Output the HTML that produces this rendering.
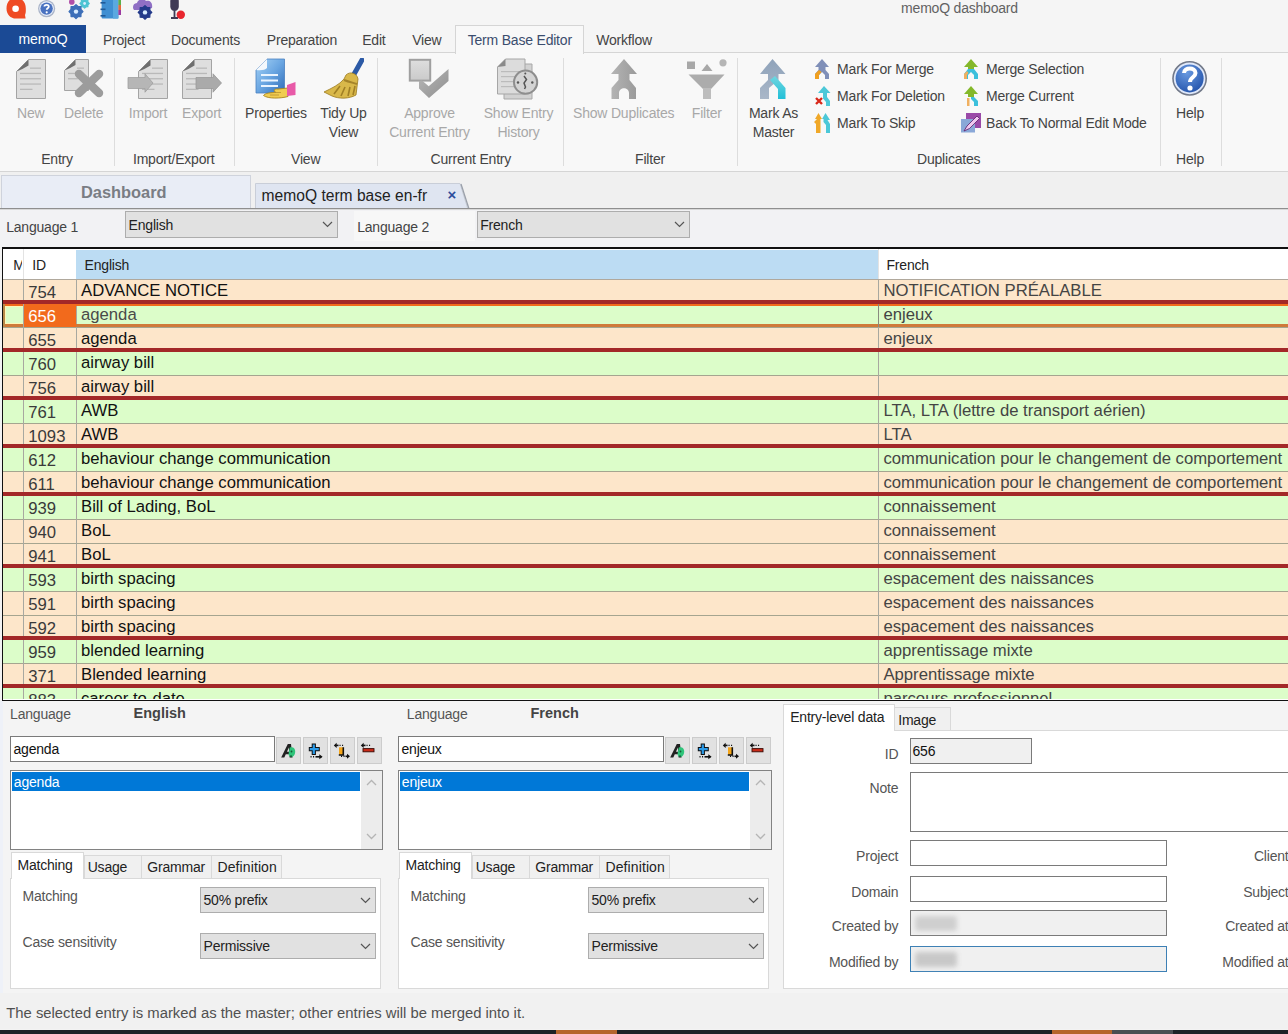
<!DOCTYPE html>
<html><head><meta charset="utf-8"><title>memoQ dashboard</title>
<style>
*{box-sizing:border-box;margin:0;padding:0}
html,body{width:1288px;height:1034px;overflow:hidden;background:#f3f3f3;font-family:"Liberation Sans",sans-serif;position:relative}
.t{position:absolute;white-space:nowrap}
.r{position:absolute}
</style></head><body>
<div class="r" style="left:0px;top:0px;width:1288px;height:53px;background:#f5f5f5;"></div>
<div class="t" style="top:1.15px;font-size:14px;line-height:14px;color:#626262;letter-spacing:-0.2px;left:859.50px;width:200px;text-align:center;">memoQ dashboard</div>
<svg class="r" style="left:5px;top:0px;" width="22" height="20" viewBox="0 0 22 20"><path d="M11 -2 C4 -2 1.5 3 1.5 8.5 C1.5 14.5 5.5 18.6 11 18.6 L20.6 18.6 L20 15 C21 13 20.8 10.5 20.8 8.5 C20.8 3 18 -2 11 -2Z" fill="#ef4a23"/><circle cx="10.6" cy="8.8" r="3.3" fill="#fff"/></svg>
<svg class="r" style="left:37px;top:0px;" width="20" height="19" viewBox="0 0 20 19"><circle cx="9.6" cy="8.6" r="8.6" fill="#aab4c8"/><circle cx="9.6" cy="8.6" r="7.3" fill="#e8eefa"/><circle cx="9.6" cy="8.6" r="6.2" fill="#4a72c0"/><path d="M7.4 6.6 C7.4 4.3 11.8 4.3 11.8 6.6 C11.8 8.2 9.7 8.3 9.7 9.8" fill="none" stroke="#fff" stroke-width="1.8"/><circle cx="9.7" cy="12.3" r="1.1" fill="#fff"/></svg>
<svg class="r" style="left:66px;top:0px;" width="25" height="20" viewBox="0 0 25 20"><circle cx="5.8" cy="1.9" r="2.8" fill="#b04fa8"/><polygon points="23.20,3.50 21.91,4.87 21.85,6.75 19.97,6.81 18.60,8.10 17.23,6.81 15.35,6.75 15.29,4.87 14.00,3.50 15.29,2.13 15.35,0.25 17.23,0.19 18.60,-1.10 19.97,0.19 21.85,0.25 21.91,2.13" fill="#4cc3d2" stroke="#4cc3d2" stroke-width="1.2" stroke-linejoin="round"/><circle cx="18.6" cy="3.5" r="1.4" fill="#d8ecff"/><polygon points="17.00,11.60 15.04,13.69 14.95,16.55 12.09,16.64 10.00,18.60 7.91,16.64 5.05,16.55 4.96,13.69 3.00,11.60 4.96,9.51 5.05,6.65 7.91,6.56 10.00,4.60 12.09,6.56 14.95,6.65 15.04,9.51" fill="#3d6fb8" stroke="#3d6fb8" stroke-width="1.2" stroke-linejoin="round"/><circle cx="10" cy="11.6" r="2.2" fill="#d8ecff"/></svg>
<svg class="r" style="left:100px;top:0px;" width="23" height="20" viewBox="0 0 23 20"><rect x="1.6" y="-1" width="16.8" height="19.6" rx="1" fill="#3f8fd2"/><rect x="13" y="-1" width="5.4" height="19.6" fill="#5aa8e0"/><rect x="18.4" y="-1" width="2.6" height="6" fill="#5ab04a"/><rect x="18.4" y="5" width="2.6" height="5" fill="#e46a3a"/><rect x="18.4" y="10" width="2.6" height="5" fill="#9b3aa0"/><rect x="0.5" y="2" width="5" height="1.6" fill="#1f5a98"/><rect x="0.5" y="8.5" width="5" height="1.6" fill="#1f5a98"/><rect x="0.5" y="15" width="5" height="1.6" fill="#1f5a98"/></svg>
<svg class="r" style="left:132px;top:0px;" width="22" height="20" viewBox="0 0 22 20"><path d="M2 10 C0 8 1 3 5 3 C6 -1 12 -2 14 1 C18 0 21 3 20 8 L14 10 Z" fill="#8f6fc4"/><polygon points="19.80,12.40 17.90,14.43 17.81,17.21 15.03,17.30 13.00,19.20 10.97,17.30 8.19,17.21 8.10,14.43 6.20,12.40 8.10,10.37 8.19,7.59 10.97,7.50 13.00,5.60 15.03,7.50 17.81,7.59 17.90,10.37" fill="#233a8a" stroke="#233a8a" stroke-width="1.2" stroke-linejoin="round"/><circle cx="13" cy="12.4" r="2.2" fill="#d8ecff"/></svg>
<svg class="r" style="left:168px;top:0px;" width="20" height="20" viewBox="0 0 20 20"><rect x="2.3" y="-3" width="8.5" height="14" rx="4.2" fill="#3f3a55"/><path d="M6.5 11 V17.5 M3 18 H10" stroke="#3f3a55" stroke-width="1.8" fill="none"/><circle cx="12.8" cy="14.7" r="4.2" fill="#e8262e"/></svg>
<div class="t" style="top:33.35px;font-size:14px;line-height:14px;color:#444;letter-spacing:-0.2px;left:102.90px;">Project</div>
<div class="t" style="top:33.35px;font-size:14px;line-height:14px;color:#444;letter-spacing:-0.2px;left:171.00px;">Documents</div>
<div class="t" style="top:33.35px;font-size:14px;line-height:14px;color:#444;letter-spacing:-0.2px;left:266.80px;">Preparation</div>
<div class="t" style="top:33.35px;font-size:14px;line-height:14px;color:#444;letter-spacing:-0.2px;left:362.20px;">Edit</div>
<div class="t" style="top:33.35px;font-size:14px;line-height:14px;color:#444;letter-spacing:-0.2px;left:412.20px;">View</div>
<div class="t" style="top:33.35px;font-size:14px;line-height:14px;color:#444;letter-spacing:-0.2px;left:596.20px;">Workflow</div>
<div class="r" style="left:0px;top:52px;width:1288px;height:120px;background:#f8f8f8;border-top:1px solid #d5d5d5;border-bottom:1px solid #d5d5d5;"></div>
<div class="r" style="left:0px;top:25px;width:86px;height:28px;background:#1b4a95;"></div>
<div class="t" style="top:32.45px;font-size:14px;line-height:14px;color:#ffffff;letter-spacing:-0.2px;left:3.00px;width:80px;text-align:center;">memoQ</div>
<div class="r" style="left:455px;top:25px;width:129px;height:29px;background:#f8f8f8;border:1px solid #d5d5d5;border-bottom:none;"></div>
<div class="t" style="top:33.35px;font-size:14px;line-height:14px;color:#3b4d6e;letter-spacing:-0.2px;left:467.70px;">Term Base Editor</div>
<div class="r" style="left:114px;top:58px;width:1px;height:108px;background:#dddddd;"></div>
<div class="r" style="left:234px;top:58px;width:1px;height:108px;background:#dddddd;"></div>
<div class="r" style="left:377px;top:58px;width:1px;height:108px;background:#dddddd;"></div>
<div class="r" style="left:563px;top:58px;width:1px;height:108px;background:#dddddd;"></div>
<div class="r" style="left:737px;top:58px;width:1px;height:108px;background:#dddddd;"></div>
<div class="r" style="left:1160px;top:58px;width:1px;height:108px;background:#dddddd;"></div>
<div class="r" style="left:1221px;top:58px;width:1px;height:108px;background:#dddddd;"></div>
<div class="t" style="top:106.15px;font-size:14px;line-height:14px;color:#a8a8a8;letter-spacing:-0.2px;left:-39.30px;width:140px;text-align:center;">New</div>
<div class="t" style="top:106.15px;font-size:14px;line-height:14px;color:#a8a8a8;letter-spacing:-0.2px;left:13.70px;width:140px;text-align:center;">Delete</div>
<div class="t" style="top:106.15px;font-size:14px;line-height:14px;color:#a8a8a8;letter-spacing:-0.2px;left:78.00px;width:140px;text-align:center;">Import</div>
<div class="t" style="top:106.15px;font-size:14px;line-height:14px;color:#a8a8a8;letter-spacing:-0.2px;left:131.70px;width:140px;text-align:center;">Export</div>
<div class="t" style="top:106.15px;font-size:14px;line-height:14px;color:#444;letter-spacing:-0.2px;left:206.00px;width:140px;text-align:center;">Properties</div>
<div class="t" style="top:106.15px;font-size:14px;line-height:14px;color:#444;letter-spacing:-0.2px;left:273.50px;width:140px;text-align:center;">Tidy Up</div>
<div class="t" style="top:124.55px;font-size:14px;line-height:14px;color:#444;letter-spacing:-0.2px;left:273.50px;width:140px;text-align:center;">View</div>
<div class="t" style="top:106.15px;font-size:14px;line-height:14px;color:#a8a8a8;letter-spacing:-0.2px;left:359.50px;width:140px;text-align:center;">Approve</div>
<div class="t" style="top:124.55px;font-size:14px;line-height:14px;color:#a8a8a8;letter-spacing:-0.2px;left:359.50px;width:140px;text-align:center;">Current Entry</div>
<div class="t" style="top:106.15px;font-size:14px;line-height:14px;color:#a8a8a8;letter-spacing:-0.2px;left:448.50px;width:140px;text-align:center;">Show Entry</div>
<div class="t" style="top:124.55px;font-size:14px;line-height:14px;color:#a8a8a8;letter-spacing:-0.2px;left:448.50px;width:140px;text-align:center;">History</div>
<div class="t" style="top:106.15px;font-size:14px;line-height:14px;color:#a8a8a8;letter-spacing:-0.2px;left:553.70px;width:140px;text-align:center;">Show Duplicates</div>
<div class="t" style="top:106.15px;font-size:14px;line-height:14px;color:#a8a8a8;letter-spacing:-0.2px;left:636.80px;width:140px;text-align:center;">Filter</div>
<div class="t" style="top:106.15px;font-size:14px;line-height:14px;color:#444;letter-spacing:-0.2px;left:703.50px;width:140px;text-align:center;">Mark As</div>
<div class="t" style="top:124.55px;font-size:14px;line-height:14px;color:#444;letter-spacing:-0.2px;left:703.50px;width:140px;text-align:center;">Master</div>
<div class="t" style="top:106.15px;font-size:14px;line-height:14px;color:#444;letter-spacing:-0.2px;left:1120.00px;width:140px;text-align:center;">Help</div>
<div class="t" style="top:152.15px;font-size:14px;line-height:14px;color:#444;letter-spacing:-0.2px;left:-23.00px;width:160px;text-align:center;">Entry</div>
<div class="t" style="top:152.15px;font-size:14px;line-height:14px;color:#444;letter-spacing:-0.2px;left:93.70px;width:160px;text-align:center;">Import/Export</div>
<div class="t" style="top:152.15px;font-size:14px;line-height:14px;color:#444;letter-spacing:-0.2px;left:225.70px;width:160px;text-align:center;">View</div>
<div class="t" style="top:152.15px;font-size:14px;line-height:14px;color:#444;letter-spacing:-0.2px;left:390.80px;width:160px;text-align:center;">Current Entry</div>
<div class="t" style="top:152.15px;font-size:14px;line-height:14px;color:#444;letter-spacing:-0.2px;left:570.00px;width:160px;text-align:center;">Filter</div>
<div class="t" style="top:152.15px;font-size:14px;line-height:14px;color:#444;letter-spacing:-0.2px;left:868.70px;width:160px;text-align:center;">Duplicates</div>
<div class="t" style="top:152.15px;font-size:14px;line-height:14px;color:#444;letter-spacing:-0.2px;left:1110.00px;width:160px;text-align:center;">Help</div>
<div class="t" style="top:61.75px;font-size:14px;line-height:14px;color:#444;letter-spacing:-0.2px;left:837.10px;">Mark For Merge</div>
<div class="t" style="top:88.75px;font-size:14px;line-height:14px;color:#444;letter-spacing:-0.2px;left:837.10px;">Mark For Deletion</div>
<div class="t" style="top:115.75px;font-size:14px;line-height:14px;color:#444;letter-spacing:-0.2px;left:837.10px;">Mark To Skip</div>
<div class="t" style="top:61.75px;font-size:14px;line-height:14px;color:#444;letter-spacing:-0.2px;left:986.00px;">Merge Selection</div>
<div class="t" style="top:88.75px;font-size:14px;line-height:14px;color:#444;letter-spacing:-0.2px;left:986.00px;">Merge Current</div>
<div class="t" style="top:115.75px;font-size:14px;line-height:14px;color:#444;letter-spacing:-0.2px;left:986.00px;">Back To Normal Edit Mode</div>
<svg class="r" style="left:16px;top:59px;" width="30" height="40" viewBox="0 0 30 40"><path d="M12.5 0.5 H29.5 V39.5 H0.5 V12.5 Z" fill="#dedede" stroke="#a4a4a4"/><path d="M0.5 12.5 L12.5 0.5 V6.6 Q6.0 10.8 0.5 12.5Z" fill="#6f6f6f"/><rect x="14" y="8.5" width="11.0" height="1.3" fill="#b9b9b9"/><rect x="4" y="13.8" width="21.0" height="1.3" fill="#b9b9b9"/><rect x="4" y="19.1" width="21.0" height="1.3" fill="#b9b9b9"/><rect x="4" y="24.4" width="21.0" height="1.3" fill="#b9b9b9"/><rect x="4" y="29.7" width="12.5" height="1.3" fill="#b9b9b9"/></svg>
<svg class="r" style="left:64px;top:59px;" width="25" height="32" viewBox="0 0 25 32"><path d="M11.5 0.5 H24.5 V31.5 H0.5 V11.5 Z" fill="#dedede" stroke="#a4a4a4"/><path d="M0.5 11.5 L11.5 0.5 V6.1 Q5.5 9.9 0.5 11.5Z" fill="#6f6f6f"/><rect x="13" y="8.5" width="7.0" height="1.3" fill="#b9b9b9"/><rect x="4" y="13.8" width="16.0" height="1.3" fill="#b9b9b9"/><rect x="4" y="19.1" width="9.8" height="1.3" fill="#b9b9b9"/></svg>
<svg class="r" style="left:73px;top:68px;" width="32" height="31" viewBox="0 0 32 31"><path d="M6 6 L26 25 M26 6 L6 25" stroke="#9c9c9c" stroke-width="8.5" stroke-linecap="round"/></svg>
<svg class="r" style="left:138px;top:59px;" width="30" height="40" viewBox="0 0 30 40"><path d="M12.5 0.5 H29.5 V39.5 H0.5 V12.5 Z" fill="#dedede" stroke="#a4a4a4"/><path d="M0.5 12.5 L12.5 0.5 V6.6 Q6.0 10.8 0.5 12.5Z" fill="#6f6f6f"/><rect x="14" y="8.5" width="11.0" height="1.3" fill="#b9b9b9"/><rect x="4" y="13.8" width="21.0" height="1.3" fill="#b9b9b9"/><rect x="4" y="19.1" width="21.0" height="1.3" fill="#b9b9b9"/><rect x="4" y="24.4" width="21.0" height="1.3" fill="#b9b9b9"/><rect x="4" y="29.7" width="12.5" height="1.3" fill="#b9b9b9"/></svg>
<svg class="r" style="left:127px;top:73px;" width="28" height="20" viewBox="0 0 28 20"><path d="M1 4.5 H18 V0.8 L26 10 L18 19.2 V15.5 H1 Z" fill="#b6b6b6" stroke="#a0a0a0" stroke-width="0.8"/></svg>
<svg class="r" style="left:182px;top:59px;" width="30" height="40" viewBox="0 0 30 40"><path d="M12.5 0.5 H29.5 V39.5 H0.5 V12.5 Z" fill="#dedede" stroke="#a4a4a4"/><path d="M0.5 12.5 L12.5 0.5 V6.6 Q6.0 10.8 0.5 12.5Z" fill="#6f6f6f"/><rect x="14" y="8.5" width="11.0" height="1.3" fill="#b9b9b9"/><rect x="4" y="13.8" width="21.0" height="1.3" fill="#b9b9b9"/><rect x="4" y="19.1" width="21.0" height="1.3" fill="#b9b9b9"/><rect x="4" y="24.4" width="21.0" height="1.3" fill="#b9b9b9"/><rect x="4" y="29.7" width="12.5" height="1.3" fill="#b9b9b9"/></svg>
<svg class="r" style="left:195px;top:73px;" width="28" height="20" viewBox="0 0 28 20"><path d="M1 4.5 H18 V0.8 L26.5 10 L18 19.2 V15.5 H1 Z" fill="#aaaaaa" stroke="#999" stroke-width="0.8"/></svg>
<svg class="r" style="left:254px;top:58px;" width="44" height="42" viewBox="0 0 44 42"><defs><linearGradient id="pb" x1="0" y1="0" x2="1" y2="1"><stop offset="0" stop-color="#a8d4f6"/><stop offset="0.5" stop-color="#6aa6e2"/><stop offset="1" stop-color="#2f6cb8"/></linearGradient></defs>
<path d="M13 1 H30.5 V35 H2 V12 Z" fill="url(#pb)" stroke="#4a80c0" stroke-width="0.8"/>
<path d="M2 12 L13 1 V10 Q10 13 2 12Z" fill="#f4f8fc"/>
<rect x="7" y="16" width="17" height="2" fill="#eaf4ff"/><rect x="7" y="21.5" width="17" height="2" fill="#eaf4ff"/><rect x="7" y="27" width="17" height="2" fill="#eaf4ff"/>
<path d="M9.5 37.5 C11 35 17 34.5 22 34.5 C19 33 20 30.5 24 31 L34 30 L34 38.5 C27 40.5 14 41 9.5 37.5Z" fill="#f0cc50" stroke="#a88420" stroke-width="0.9"/><path d="M16 37 H25 M19 34.5 H27" stroke="#b89030" stroke-width="0.8"/>
<path d="M33 27 L41.5 24 L41.5 37 L33 38Z" fill="#e85aa8"/></svg>
<svg class="r" style="left:322px;top:58px;" width="42" height="42" viewBox="0 0 42 42"><path d="M40 2 L31 18" stroke="#2c5aa6" stroke-width="5" stroke-linecap="round"/>
<path d="M24 17 C28 13 35 15 36 21 L34 37 C27 41 17 41 10 38 L2 34 C10 30 17 27 22 21 Z" fill="#d9b84a" stroke="#9a7a20" stroke-width="0.8"/>
<path d="M22 22 C27 24 32 25 35 26" stroke="#a5842a" stroke-width="2" fill="none"/>
<path d="M12 36 L18 28 M19 38 L23 29 M26 38 L28 29 M31 37 L33 28" stroke="#a07f25" stroke-width="1.6"/></svg>
<svg class="r" style="left:408px;top:58px;" width="43" height="42" viewBox="0 0 43 42"><defs><linearGradient id="ag" x1="0" y1="0" x2="0" y2="1"><stop offset="0" stop-color="#dedede"/><stop offset="1" stop-color="#cacaca"/></linearGradient><linearGradient id="ck" x1="0" y1="0" x2="1" y2="1"><stop offset="0" stop-color="#b8b8b8"/><stop offset="1" stop-color="#8f8f8f"/></linearGradient></defs>
<rect x="1.8" y="1.8" width="20.4" height="20.8" fill="url(#ag)" stroke="#a0a0a0" stroke-width="2"/>
<path d="M11 23 V30.5 L21 40 L40.5 23 V11 L20.7 28.2 L14 22.5 Z" fill="url(#ck)"/></svg>
<svg class="r" style="left:496px;top:58px;" width="44" height="42" viewBox="0 0 44 42"><path d="M8 6 H36 V41 H8Z" fill="#d2d2d2" stroke="#a8a8a8"/>
<path d="M9.5 1 H29 V36 H1.5 V9 Z" fill="#dcdcdc" stroke="#a6a6a6"/>
<path d="M1.5 9 L9.5 1 V8 Z" fill="#8a8a8a"/>
<rect x="5" y="13" width="20" height="1.2" fill="#bbb"/><rect x="5" y="18" width="20" height="1.2" fill="#bbb"/><rect x="5" y="23" width="20" height="1.2" fill="#bbb"/><rect x="5" y="28" width="20" height="1.2" fill="#bbb"/>
<circle cx="29.6" cy="24.2" r="11.6" fill="#d4d4d4" stroke="#8e8e8e" stroke-width="2"/>
<path d="M28 18 L30.5 21.5 L28 25 L29.5 29 L28.5 31" stroke="#555" stroke-width="1.5" fill="none"/><circle cx="29.3" cy="15.5" r="1" fill="#555"/>
<circle cx="22" cy="24.5" r="1.2" fill="#555"/><circle cx="36.3" cy="24.5" r="1.2" fill="#555"/></svg>
<svg class="r" style="left:610px;top:58px;" width="28" height="42" viewBox="0 0 28 42"><defs><linearGradient id="sd" x1="0" y1="0" x2="1" y2="0"><stop offset="0" stop-color="#b4b4b4"/><stop offset="1" stop-color="#9a9a9a"/></linearGradient></defs><path d="M14 1 L27 16 H19.5 V22 L26 30 V41 H19 V35 C19 28.5 9 28.5 9 35 V41 H1.5 V30 L8.5 22 V16 H1 Z" fill="url(#sd)"/></svg>
<svg class="r" style="left:686px;top:58px;" width="42" height="42" viewBox="0 0 42 42"><rect x="1" y="3.5" width="8" height="7.5" fill="#a8a8a8"/><path d="M21 6 L26.5 13 H15.5Z" fill="#a8a8a8"/><circle cx="37" cy="4.8" r="3.6" fill="#b5b5b5"/>
<path d="M2.5 16.5 H38.5 L25 31 H17Z" fill="#acacac"/><rect x="17" y="30" width="8" height="11" fill="#bdbdbd"/></svg>
<svg class="r" style="left:759px;top:58px;" width="28" height="42" viewBox="0 0 28 42"><defs><linearGradient id="mg" x1="0" y1="0" x2="0" y2="1"><stop offset="0" stop-color="#8fa3ba"/><stop offset="1" stop-color="#a9b7c8"/></linearGradient><linearGradient id="tg" x1="0" y1="0" x2="0" y2="1"><stop offset="0" stop-color="#6fd6e0"/><stop offset="1" stop-color="#22c0d8"/></linearGradient></defs>
<path d="M13.5 1 L26.5 16 H19.5 V22 L10 30 V41 H1 V30 L9 22 V16 H1 Z" fill="url(#mg)"/>
<path d="M11 22 L16 18 L26.5 30 V41 H19 V31Z" fill="url(#tg)"/></svg>
<svg class="r" style="left:814px;top:58px;" width="16" height="22" viewBox="0 0 16 22"><path d="M8 1 L15 9 H11.5 V12 L15 16 V21 H11 V17 L8 14 L5 17 V21 H1 V16 L4.5 12 V9 H1Z" fill="#7f8fb8"/><path d="M1 21 V16 L5 12 L7.5 14 L5 17 V21Z" fill="#f0a020"/></svg>
<svg class="r" style="left:814px;top:85px;" width="17" height="22" viewBox="0 0 17 22"><path d="M10 1 L16.5 8 H13 V12 L16 16 V21 H12 V17 L9 13.5 V8 H4Z" fill="#4cc8d8"/><path d="M2 13 L8 19 M8 13 L2 19" stroke="#d8281a" stroke-width="2.4"/></svg>
<svg class="r" style="left:813px;top:112px;" width="18" height="22" viewBox="0 0 18 22"><path d="M5.5 1 L9 7 H7.5 V21 H3 V12 L1 10 L4 7 H2Z" fill="#f0a828"/><path d="M12.5 1 L17 8 H14.5 L17 12 V21 H13 V13 L10.5 10 V7 H9Z" fill="#4cc8d8"/></svg>
<svg class="r" style="left:963px;top:58px;" width="16" height="22" viewBox="0 0 16 22"><path d="M8 1 L15 9 H11 V12 H5 V9 H1Z" fill="#84b82a"/><path d="M5 11 H11 L15 16 V21 H11 V17 L8 14 L5 17 V21 H1 V16Z" fill="#3cc0dc"/><path d="M1 21 V16 L4 13 L5.5 15 L4 17 V21Z" fill="#f0b060"/></svg>
<svg class="r" style="left:963px;top:85px;" width="16" height="22" viewBox="0 0 16 22"><path d="M8 1 L15 9 H11 V12 H5 V9 H1Z" fill="#84b82a"/><path d="M5 12 H11 L15 16 V21 H11 V17 L8 14 V12Z" fill="#3cc0dc"/><path d="M4 13 H6.5 V21 H4Z" fill="#f0b060"/></svg>
<svg class="r" style="left:960px;top:112px;" width="23" height="22" viewBox="0 0 23 22"><rect x="6" y="1" width="15" height="15" fill="#9a4aa8"/><rect x="1" y="7" width="14" height="13.5" fill="#8aa8d8"/><path d="M4 19 L7 14 L17 4 L19.5 6.5 L9.5 16.5Z" fill="#f0c8f0" stroke="#5a1a6a" stroke-width="0.8"/></svg>
<svg class="r" style="left:1171px;top:60px;" width="38" height="38" viewBox="0 0 38 38"><defs><radialGradient id="hg" cx="0.4" cy="0.3" r="0.8"><stop offset="0" stop-color="#6a9ae0"/><stop offset="1" stop-color="#1f4fa8"/></radialGradient></defs>
<circle cx="18.6" cy="18.4" r="17.4" fill="#717888"/><circle cx="18.6" cy="18.4" r="15.8" fill="#dfe8fa"/><circle cx="18.6" cy="18.4" r="14" fill="url(#hg)"/>
<path d="M13 13 C13 7 24.5 7 24.5 13 C24.5 17.5 19 17 19 22" fill="none" stroke="#fff" stroke-width="4"/><circle cx="19" cy="28" r="2.6" fill="#fff"/></svg>
<div class="r" style="left:0px;top:172px;width:1288px;height:36px;background:#f0f0f0;"></div>
<div class="r" style="left:1px;top:175px;width:250px;height:34px;background:#e9edf6;border:1px solid #cfd3dc;border-bottom:none;"></div>
<div class="t" style="top:183.82px;font-size:16.4px;line-height:16.4px;color:#7a7d84;font-weight:bold;left:23.80px;width:200px;text-align:center;">Dashboard</div>
<svg class="r" style="left:255px;top:183px;" width="215" height="27" viewBox="0 0 215 27"><path d="M0.5 26.5 V0.5 H205 L213 26.5" fill="#dfe5f1" stroke="#c9ced8" stroke-width="1"/><path d="M206 1 L214 26" stroke="#9aa0aa" stroke-width="1.3" fill="none"/></svg>
<div class="t" style="top:187.69px;font-size:15.6px;line-height:15.6px;color:#222;left:261.60px;">memoQ term base en-fr</div>
<div class="t" style="top:187.30px;font-size:15px;line-height:15px;color:#2c4c9c;font-weight:bold;left:442.00px;width:20px;text-align:center;">×</div>
<div class="r" style="left:0px;top:208px;width:1288px;height:1px;background:#8f8f8f;"></div>
<div class="r" style="left:0px;top:209px;width:1288px;height:1px;background:#d8d8d8;"></div>
<div class="r" style="left:0px;top:210px;width:1288px;height:37px;background:#f2f2f4;"></div>
<div class="t" style="top:220.15px;font-size:14px;line-height:14px;color:#444;letter-spacing:-0.2px;left:6.20px;">Language 1</div>
<div class="r" style="left:125px;top:211px;width:213px;height:27px;background:#e1e1e1;border:1px solid #adadad;"></div>
<div class="t" style="top:218.15px;font-size:14px;line-height:14px;color:#222;letter-spacing:-0.2px;left:128.60px;">English</div>
<svg class="r" style="left:322px;top:221px;" width="11" height="7" viewBox="0 0 11 7"><path d="M1 1 L5.5 5.5 L10 1" fill="none" stroke="#555" stroke-width="1.2"/></svg>
<div class="r" style="left:354px;top:211px;width:121px;height:30px;background:#f7f7f7;"></div>
<div class="t" style="top:220.15px;font-size:14px;line-height:14px;color:#444;letter-spacing:-0.2px;left:357.20px;">Language 2</div>
<div class="r" style="left:477px;top:211px;width:213px;height:27px;background:#e1e1e1;border:1px solid #adadad;"></div>
<div class="t" style="top:218.15px;font-size:14px;line-height:14px;color:#222;letter-spacing:-0.2px;left:480.20px;">French</div>
<svg class="r" style="left:674px;top:221px;" width="11" height="7" viewBox="0 0 11 7"><path d="M1 1 L5.5 5.5 L10 1" fill="none" stroke="#555" stroke-width="1.2"/></svg>
<div class="r" style="left:2px;top:247px;width:1290px;height:454px;background:#ffffff;border-left:1px solid #111;border-top:2px solid #111;border-bottom:1px solid #111;"></div>
<div class="r" style="left:3px;top:249px;width:1285px;height:30px;background:#ffffff;"></div>
<div class="r" style="left:76px;top:250px;width:802px;height:29px;background:#bcdcf3;"></div>
<div class="r" style="left:3px;top:279px;width:1285px;height:1px;background:#b0a89c;"></div>
<div class="r" style="left:23px;top:249px;width:1px;height:30px;background:#e3e3e3;"></div>
<div class="r" style="left:878px;top:249px;width:1px;height:30px;background:#e3e3e3;"></div>
<div class="t" style="top:258.15px;font-size:14px;line-height:14px;color:#222;letter-spacing:-0.2px;left:13.20px;width:9px;overflow:hidden;">M</div>
<div class="t" style="top:258.15px;font-size:14px;line-height:14px;color:#222;letter-spacing:-0.2px;left:32.20px;">ID</div>
<div class="t" style="top:258.15px;font-size:14px;line-height:14px;color:#222;letter-spacing:-0.2px;left:84.60px;">English</div>
<div class="t" style="top:258.15px;font-size:14px;line-height:14px;color:#222;letter-spacing:-0.2px;left:886.50px;">French</div>
<div class="r" style="left:3px;top:280px;width:1285px;height:419px;overflow:hidden">
<div class="r" style="left:0px;top:0px;width:1290px;height:24px;background:#fde6ca;"></div>
<div class="r" style="left:0px;top:20px;width:1285px;height:4px;background:#a32828;"></div>
<div class="r" style="left:20px;top:0px;width:1px;height:20px;background:#a8a8a0;"></div>
<div class="r" style="left:73px;top:0px;width:1px;height:20px;background:#a8a8a0;"></div>
<div class="r" style="left:875px;top:0px;width:1px;height:20px;background:#a8a8a0;"></div>
<div class="t" style="top:4.66px;font-size:16.7px;line-height:16.7px;color:#3a3a3a;left:25.30px;">754</div>
<div class="t" style="top:2.86px;font-size:16.7px;line-height:16.7px;color:#111;left:78.00px;">ADVANCE NOTICE</div>
<div class="t" style="top:2.86px;font-size:16.7px;line-height:16.7px;color:#444;left:880.40px;">NOTIFICATION PRÉALABLE</div>
<div class="r" style="left:0px;top:24px;width:1290px;height:24px;background:#dcfdc9;"></div>
<div class="r" style="left:0px;top:47px;width:1290px;height:1px;background:#a5a590;"></div>
<div class="r" style="left:20px;top:24px;width:1px;height:24px;background:#a8a8a0;"></div>
<div class="r" style="left:73px;top:24px;width:1px;height:24px;background:#a8a8a0;"></div>
<div class="r" style="left:875px;top:24px;width:1px;height:24px;background:#a8a8a0;"></div>
<div class="r" style="left:0px;top:24px;width:1290px;height:2px;background:#f26a1c;"></div>
<div class="r" style="left:0px;top:44px;width:1290px;height:3px;background:#cf7a3a;"></div>
<div class="r" style="left:0px;top:24px;width:2px;height:23px;background:#b8894a;"></div>
<div class="r" style="left:2px;top:26px;width:18px;height:18px;border:1px solid #fff6b8;border-right:none;"></div>
<div class="r" style="left:20px;top:24px;width:1px;height:23px;background:#a8a8a0;"></div>
<div class="r" style="left:875px;top:24px;width:1px;height:23px;background:#8a8a80;"></div>
<div class="r" style="left:21px;top:24px;width:52px;height:23px;background:#f26a1c;"></div>
<div class="t" style="top:28.66px;font-size:16.7px;line-height:16.7px;color:#ffffff;left:25.30px;">656</div>
<div class="t" style="top:26.86px;font-size:16.7px;line-height:16.7px;color:#4a4a4a;left:78.00px;">agenda</div>
<div class="t" style="top:26.86px;font-size:16.7px;line-height:16.7px;color:#444;left:880.40px;">enjeux</div>
<div class="r" style="left:0px;top:48px;width:1290px;height:24px;background:#fde6ca;"></div>
<div class="r" style="left:0px;top:68px;width:1285px;height:4px;background:#a32828;"></div>
<div class="r" style="left:20px;top:48px;width:1px;height:20px;background:#a8a8a0;"></div>
<div class="r" style="left:73px;top:48px;width:1px;height:20px;background:#a8a8a0;"></div>
<div class="r" style="left:875px;top:48px;width:1px;height:20px;background:#a8a8a0;"></div>
<div class="t" style="top:52.66px;font-size:16.7px;line-height:16.7px;color:#3a3a3a;left:25.30px;">655</div>
<div class="t" style="top:50.86px;font-size:16.7px;line-height:16.7px;color:#111;left:78.00px;">agenda</div>
<div class="t" style="top:50.86px;font-size:16.7px;line-height:16.7px;color:#444;left:880.40px;">enjeux</div>
<div class="r" style="left:0px;top:72px;width:1290px;height:24px;background:#dcfdc9;"></div>
<div class="r" style="left:0px;top:95px;width:1290px;height:1px;background:#a5a590;"></div>
<div class="r" style="left:20px;top:72px;width:1px;height:24px;background:#a8a8a0;"></div>
<div class="r" style="left:73px;top:72px;width:1px;height:24px;background:#a8a8a0;"></div>
<div class="r" style="left:875px;top:72px;width:1px;height:24px;background:#a8a8a0;"></div>
<div class="t" style="top:76.66px;font-size:16.7px;line-height:16.7px;color:#3a3a3a;left:25.30px;">760</div>
<div class="t" style="top:74.86px;font-size:16.7px;line-height:16.7px;color:#111;left:78.00px;">airway bill</div>
<div class="t" style="top:74.86px;font-size:16.7px;line-height:16.7px;color:#444;left:880.40px;"></div>
<div class="r" style="left:0px;top:96px;width:1290px;height:24px;background:#fde6ca;"></div>
<div class="r" style="left:0px;top:116px;width:1285px;height:4px;background:#a32828;"></div>
<div class="r" style="left:20px;top:96px;width:1px;height:20px;background:#a8a8a0;"></div>
<div class="r" style="left:73px;top:96px;width:1px;height:20px;background:#a8a8a0;"></div>
<div class="r" style="left:875px;top:96px;width:1px;height:20px;background:#a8a8a0;"></div>
<div class="t" style="top:100.66px;font-size:16.7px;line-height:16.7px;color:#3a3a3a;left:25.30px;">756</div>
<div class="t" style="top:98.86px;font-size:16.7px;line-height:16.7px;color:#111;left:78.00px;">airway bill</div>
<div class="t" style="top:98.86px;font-size:16.7px;line-height:16.7px;color:#444;left:880.40px;"></div>
<div class="r" style="left:0px;top:120px;width:1290px;height:24px;background:#dcfdc9;"></div>
<div class="r" style="left:0px;top:143px;width:1290px;height:1px;background:#a5a590;"></div>
<div class="r" style="left:20px;top:120px;width:1px;height:24px;background:#a8a8a0;"></div>
<div class="r" style="left:73px;top:120px;width:1px;height:24px;background:#a8a8a0;"></div>
<div class="r" style="left:875px;top:120px;width:1px;height:24px;background:#a8a8a0;"></div>
<div class="t" style="top:124.66px;font-size:16.7px;line-height:16.7px;color:#3a3a3a;left:25.30px;">761</div>
<div class="t" style="top:122.86px;font-size:16.7px;line-height:16.7px;color:#111;left:78.00px;">AWB</div>
<div class="t" style="top:122.86px;font-size:16.7px;line-height:16.7px;color:#444;left:880.40px;">LTA, LTA (lettre de transport aérien)</div>
<div class="r" style="left:0px;top:144px;width:1290px;height:24px;background:#fde6ca;"></div>
<div class="r" style="left:0px;top:164px;width:1285px;height:4px;background:#a32828;"></div>
<div class="r" style="left:20px;top:144px;width:1px;height:20px;background:#a8a8a0;"></div>
<div class="r" style="left:73px;top:144px;width:1px;height:20px;background:#a8a8a0;"></div>
<div class="r" style="left:875px;top:144px;width:1px;height:20px;background:#a8a8a0;"></div>
<div class="t" style="top:148.66px;font-size:16.7px;line-height:16.7px;color:#3a3a3a;left:25.30px;">1093</div>
<div class="t" style="top:146.86px;font-size:16.7px;line-height:16.7px;color:#111;left:78.00px;">AWB</div>
<div class="t" style="top:146.86px;font-size:16.7px;line-height:16.7px;color:#444;left:880.40px;">LTA</div>
<div class="r" style="left:0px;top:168px;width:1290px;height:24px;background:#dcfdc9;"></div>
<div class="r" style="left:0px;top:191px;width:1290px;height:1px;background:#a5a590;"></div>
<div class="r" style="left:20px;top:168px;width:1px;height:24px;background:#a8a8a0;"></div>
<div class="r" style="left:73px;top:168px;width:1px;height:24px;background:#a8a8a0;"></div>
<div class="r" style="left:875px;top:168px;width:1px;height:24px;background:#a8a8a0;"></div>
<div class="t" style="top:172.66px;font-size:16.7px;line-height:16.7px;color:#3a3a3a;left:25.30px;">612</div>
<div class="t" style="top:170.86px;font-size:16.7px;line-height:16.7px;color:#111;left:78.00px;">behaviour change communication</div>
<div class="t" style="top:170.86px;font-size:16.7px;line-height:16.7px;color:#444;left:880.40px;">communication pour le changement de comportement</div>
<div class="r" style="left:0px;top:192px;width:1290px;height:24px;background:#fde6ca;"></div>
<div class="r" style="left:0px;top:212px;width:1285px;height:4px;background:#a32828;"></div>
<div class="r" style="left:20px;top:192px;width:1px;height:20px;background:#a8a8a0;"></div>
<div class="r" style="left:73px;top:192px;width:1px;height:20px;background:#a8a8a0;"></div>
<div class="r" style="left:875px;top:192px;width:1px;height:20px;background:#a8a8a0;"></div>
<div class="t" style="top:196.66px;font-size:16.7px;line-height:16.7px;color:#3a3a3a;left:25.30px;">611</div>
<div class="t" style="top:194.86px;font-size:16.7px;line-height:16.7px;color:#111;left:78.00px;">behaviour change communication</div>
<div class="t" style="top:194.86px;font-size:16.7px;line-height:16.7px;color:#444;left:880.40px;">communication pour le changement de comportement</div>
<div class="r" style="left:0px;top:216px;width:1290px;height:24px;background:#dcfdc9;"></div>
<div class="r" style="left:0px;top:239px;width:1290px;height:1px;background:#a5a590;"></div>
<div class="r" style="left:20px;top:216px;width:1px;height:24px;background:#a8a8a0;"></div>
<div class="r" style="left:73px;top:216px;width:1px;height:24px;background:#a8a8a0;"></div>
<div class="r" style="left:875px;top:216px;width:1px;height:24px;background:#a8a8a0;"></div>
<div class="t" style="top:220.66px;font-size:16.7px;line-height:16.7px;color:#3a3a3a;left:25.30px;">939</div>
<div class="t" style="top:218.86px;font-size:16.7px;line-height:16.7px;color:#111;left:78.00px;">Bill of Lading, BoL</div>
<div class="t" style="top:218.86px;font-size:16.7px;line-height:16.7px;color:#444;left:880.40px;">connaissement</div>
<div class="r" style="left:0px;top:240px;width:1290px;height:24px;background:#fde6ca;"></div>
<div class="r" style="left:0px;top:263px;width:1290px;height:1px;background:#a5a590;"></div>
<div class="r" style="left:20px;top:240px;width:1px;height:24px;background:#a8a8a0;"></div>
<div class="r" style="left:73px;top:240px;width:1px;height:24px;background:#a8a8a0;"></div>
<div class="r" style="left:875px;top:240px;width:1px;height:24px;background:#a8a8a0;"></div>
<div class="t" style="top:244.66px;font-size:16.7px;line-height:16.7px;color:#3a3a3a;left:25.30px;">940</div>
<div class="t" style="top:242.86px;font-size:16.7px;line-height:16.7px;color:#111;left:78.00px;">BoL</div>
<div class="t" style="top:242.86px;font-size:16.7px;line-height:16.7px;color:#444;left:880.40px;">connaissement</div>
<div class="r" style="left:0px;top:264px;width:1290px;height:24px;background:#fde6ca;"></div>
<div class="r" style="left:0px;top:284px;width:1285px;height:4px;background:#a32828;"></div>
<div class="r" style="left:20px;top:264px;width:1px;height:20px;background:#a8a8a0;"></div>
<div class="r" style="left:73px;top:264px;width:1px;height:20px;background:#a8a8a0;"></div>
<div class="r" style="left:875px;top:264px;width:1px;height:20px;background:#a8a8a0;"></div>
<div class="t" style="top:268.66px;font-size:16.7px;line-height:16.7px;color:#3a3a3a;left:25.30px;">941</div>
<div class="t" style="top:266.86px;font-size:16.7px;line-height:16.7px;color:#111;left:78.00px;">BoL</div>
<div class="t" style="top:266.86px;font-size:16.7px;line-height:16.7px;color:#444;left:880.40px;">connaissement</div>
<div class="r" style="left:0px;top:288px;width:1290px;height:24px;background:#dcfdc9;"></div>
<div class="r" style="left:0px;top:311px;width:1290px;height:1px;background:#a5a590;"></div>
<div class="r" style="left:20px;top:288px;width:1px;height:24px;background:#a8a8a0;"></div>
<div class="r" style="left:73px;top:288px;width:1px;height:24px;background:#a8a8a0;"></div>
<div class="r" style="left:875px;top:288px;width:1px;height:24px;background:#a8a8a0;"></div>
<div class="t" style="top:292.66px;font-size:16.7px;line-height:16.7px;color:#3a3a3a;left:25.30px;">593</div>
<div class="t" style="top:290.86px;font-size:16.7px;line-height:16.7px;color:#111;left:78.00px;">birth spacing</div>
<div class="t" style="top:290.86px;font-size:16.7px;line-height:16.7px;color:#444;left:880.40px;">espacement des naissances</div>
<div class="r" style="left:0px;top:312px;width:1290px;height:24px;background:#fde6ca;"></div>
<div class="r" style="left:0px;top:335px;width:1290px;height:1px;background:#a5a590;"></div>
<div class="r" style="left:20px;top:312px;width:1px;height:24px;background:#a8a8a0;"></div>
<div class="r" style="left:73px;top:312px;width:1px;height:24px;background:#a8a8a0;"></div>
<div class="r" style="left:875px;top:312px;width:1px;height:24px;background:#a8a8a0;"></div>
<div class="t" style="top:316.66px;font-size:16.7px;line-height:16.7px;color:#3a3a3a;left:25.30px;">591</div>
<div class="t" style="top:314.86px;font-size:16.7px;line-height:16.7px;color:#111;left:78.00px;">birth spacing</div>
<div class="t" style="top:314.86px;font-size:16.7px;line-height:16.7px;color:#444;left:880.40px;">espacement des naissances</div>
<div class="r" style="left:0px;top:336px;width:1290px;height:24px;background:#fde6ca;"></div>
<div class="r" style="left:0px;top:356px;width:1285px;height:4px;background:#a32828;"></div>
<div class="r" style="left:20px;top:336px;width:1px;height:20px;background:#a8a8a0;"></div>
<div class="r" style="left:73px;top:336px;width:1px;height:20px;background:#a8a8a0;"></div>
<div class="r" style="left:875px;top:336px;width:1px;height:20px;background:#a8a8a0;"></div>
<div class="t" style="top:340.66px;font-size:16.7px;line-height:16.7px;color:#3a3a3a;left:25.30px;">592</div>
<div class="t" style="top:338.86px;font-size:16.7px;line-height:16.7px;color:#111;left:78.00px;">birth spacing</div>
<div class="t" style="top:338.86px;font-size:16.7px;line-height:16.7px;color:#444;left:880.40px;">espacement des naissances</div>
<div class="r" style="left:0px;top:360px;width:1290px;height:24px;background:#dcfdc9;"></div>
<div class="r" style="left:0px;top:383px;width:1290px;height:1px;background:#a5a590;"></div>
<div class="r" style="left:20px;top:360px;width:1px;height:24px;background:#a8a8a0;"></div>
<div class="r" style="left:73px;top:360px;width:1px;height:24px;background:#a8a8a0;"></div>
<div class="r" style="left:875px;top:360px;width:1px;height:24px;background:#a8a8a0;"></div>
<div class="t" style="top:364.66px;font-size:16.7px;line-height:16.7px;color:#3a3a3a;left:25.30px;">959</div>
<div class="t" style="top:362.86px;font-size:16.7px;line-height:16.7px;color:#111;left:78.00px;">blended learning</div>
<div class="t" style="top:362.86px;font-size:16.7px;line-height:16.7px;color:#444;left:880.40px;">apprentissage mixte</div>
<div class="r" style="left:0px;top:384px;width:1290px;height:24px;background:#fde6ca;"></div>
<div class="r" style="left:0px;top:404px;width:1285px;height:4px;background:#a32828;"></div>
<div class="r" style="left:20px;top:384px;width:1px;height:20px;background:#a8a8a0;"></div>
<div class="r" style="left:73px;top:384px;width:1px;height:20px;background:#a8a8a0;"></div>
<div class="r" style="left:875px;top:384px;width:1px;height:20px;background:#a8a8a0;"></div>
<div class="t" style="top:388.66px;font-size:16.7px;line-height:16.7px;color:#3a3a3a;left:25.30px;">371</div>
<div class="t" style="top:386.86px;font-size:16.7px;line-height:16.7px;color:#111;left:78.00px;">Blended learning</div>
<div class="t" style="top:386.86px;font-size:16.7px;line-height:16.7px;color:#444;left:880.40px;">Apprentissage mixte</div>
<div class="r" style="left:0px;top:408px;width:1290px;height:24px;background:#dcfdc9;"></div>
<div class="r" style="left:0px;top:431px;width:1290px;height:1px;background:#a5a590;"></div>
<div class="r" style="left:20px;top:408px;width:1px;height:24px;background:#a8a8a0;"></div>
<div class="r" style="left:73px;top:408px;width:1px;height:24px;background:#a8a8a0;"></div>
<div class="r" style="left:875px;top:408px;width:1px;height:24px;background:#a8a8a0;"></div>
<div class="t" style="top:412.66px;font-size:16.7px;line-height:16.7px;color:#3a3a3a;left:25.30px;">883</div>
<div class="t" style="top:410.86px;font-size:16.7px;line-height:16.7px;color:#111;left:78.00px;">career to-date</div>
<div class="t" style="top:410.86px;font-size:16.7px;line-height:16.7px;color:#444;left:880.40px;">parcours professionnel</div>
</div>
<div class="r" style="left:0px;top:701px;width:1288px;height:292px;background:#f4f4f4;"></div>
<div class="r" style="left:0px;top:701px;width:3px;height:292px;background:#eef1f8;"></div>
<div class="t" style="top:707.35px;font-size:14px;line-height:14px;color:#555;letter-spacing:-0.2px;left:10.10px;">Language</div>
<div class="t" style="top:705.73px;font-size:14.5px;line-height:14.5px;color:#444;font-weight:bold;left:133.50px;">English</div>
<div class="r" style="left:10px;top:736px;width:265px;height:26px;background:#ffffff;border:1px solid #7a7a7a;"></div>
<div class="t" style="top:741.85px;font-size:14px;line-height:14px;color:#111;letter-spacing:-0.2px;left:13.50px;">agenda</div>
<div class="r" style="left:276px;top:737px;width:25px;height:27px;background:#e1e1e1;border:1px solid #cccccc;"></div>
<div class="r" style="left:303px;top:737px;width:25px;height:27px;background:#e1e1e1;border:1px solid #cccccc;"></div>
<div class="r" style="left:330px;top:737px;width:25px;height:27px;background:#e1e1e1;border:1px solid #cccccc;"></div>
<div class="r" style="left:357px;top:737px;width:25px;height:27px;background:#e1e1e1;border:1px solid #cccccc;"></div>
<svg class="r" style="left:280px;top:743px;" width="17" height="16" viewBox="0 0 17 16"><path d="M1.2 14.6 L7.8 1 H11 L12.6 14.6 H9.6 L9.3 11.3 H5.8 L4.3 14.6Z M7 8.8 H9.1 L8.8 4.6Z" fill="#222"/><path d="M9.8 4.5 C13 3.2 15.4 5.5 15.2 8.5 C15.2 11.5 13.5 14.5 10.5 14 C8.5 13.6 8.2 11 9 8.5Z" fill="#2fc47a"/><circle cx="11.5" cy="8.5" r="0.9" fill="#155a35"/><circle cx="11" cy="13.2" r="1" fill="#155a35"/></svg>
<svg class="r" style="left:307px;top:742px;" width="18" height="18" viewBox="0 0 18 18"><path d="M6.8 1.5 V13 M1.8 7.2 H12.8" stroke="#111" stroke-width="4.2"/><path d="M6.8 2.5 V12 M2.8 7.2 H11.8" stroke="#2a9ae8" stroke-width="2.2"/><path d="M3.5 14.8 H4.6 M6 14.8 H7.1" stroke="#111" stroke-width="1.4"/><path d="M8.5 14.8 H14.5" stroke="#111" stroke-width="1.6"/><path d="M12.3 12.3 L15.6 14.8 L12.3 17.3Z" fill="#111"/></svg>
<svg class="r" style="left:333px;top:742px;" width="18" height="18" viewBox="0 0 18 18"><path d="M0.8 3.4 L3.6 0.8 V6 Z" fill="#111"/><path d="M3 3.4 H5.5" stroke="#111" stroke-width="1.6"/><path d="M6.5 3.4 H7.6 M9 3.4 H10.1" stroke="#111" stroke-width="1.4"/><rect x="6" y="5.3" width="4.3" height="7.5" fill="#f4a418"/><path d="M10.3 5.2 V13 H5.8" stroke="#111" stroke-width="1.6" fill="none"/><path d="M8 14.3 H9.1 M10.5 14.3 H11.6" stroke="#111" stroke-width="1.4"/><path d="M12.5 14.3 H14.5" stroke="#111" stroke-width="1.6"/><path d="M14 11.8 L17 14.3 L14 16.8Z" fill="#111"/></svg>
<svg class="r" style="left:360px;top:742px;" width="18" height="14" viewBox="0 0 18 14"><path d="M0.8 3.4 L3.6 0.8 V6 Z" fill="#111"/><path d="M3 3.4 H5.5" stroke="#111" stroke-width="1.6"/><path d="M6.5 3.4 H7.6 M9 3.4 H10.1" stroke="#111" stroke-width="1.4"/><rect x="3" y="6.6" width="11" height="3.2" fill="#c82a18" stroke="#3a0a05" stroke-width="0.9"/></svg>
<div class="r" style="left:10px;top:770px;width:373px;height:80px;background:#ffffff;border:1px solid #828282;"></div>
<div class="r" style="left:12px;top:772px;width:348px;height:19px;background:#0078d7;"></div>
<div class="t" style="top:775.35px;font-size:14px;line-height:14px;color:#ffffff;letter-spacing:-0.2px;left:13.80px;">agenda</div>
<div class="r" style="left:361px;top:771px;width:21px;height:78px;background:#ececec;"></div>
<svg class="r" style="left:366px;top:779px;" width="11" height="7" viewBox="0 0 11 7"><path d="M1 6 L5.5 1.5 L10 6" fill="none" stroke="#b5b5b5" stroke-width="1.3"/></svg>
<svg class="r" style="left:366px;top:833px;" width="11" height="7" viewBox="0 0 11 7"><path d="M1 1 L5.5 5.5 L10 1" fill="none" stroke="#b5b5b5" stroke-width="1.3"/></svg>
<div class="r" style="left:10px;top:878px;width:371px;height:111px;background:#ffffff;border:1px solid #d9d9d9;"></div>
<div class="r" style="left:83.5px;top:855px;width:58.80000000000001px;height:24px;background:#f0f0f0;border:1px solid #d9d9d9;"></div>
<div class="t" style="top:859.85px;font-size:14px;line-height:14px;color:#222;letter-spacing:-0.2px;left:87.70px;">Usage</div>
<div class="r" style="left:141.3px;top:855px;width:70.69999999999999px;height:24px;background:#f0f0f0;border:1px solid #d9d9d9;"></div>
<div class="t" style="top:859.85px;font-size:14px;line-height:14px;color:#222;letter-spacing:-0.2px;left:147.30px;">Grammar</div>
<div class="r" style="left:211px;top:855px;width:71px;height:24px;background:#f0f0f0;border:1px solid #d9d9d9;"></div>
<div class="t" style="top:859.85px;font-size:14px;line-height:14px;color:#222;letter-spacing:0.1px;left:217.50px;">Definition</div>
<div class="r" style="left:10.5px;top:852px;width:73.5px;height:27px;background:#ffffff;border:1px solid #d9d9d9;border-bottom:none;"></div>
<div class="t" style="top:857.95px;font-size:14px;line-height:14px;color:#222;letter-spacing:-0.2px;left:17.50px;">Matching</div>
<div class="t" style="top:889.25px;font-size:14px;line-height:14px;color:#555;letter-spacing:-0.2px;left:22.50px;">Matching</div>
<div class="t" style="top:934.85px;font-size:14px;line-height:14px;color:#555;letter-spacing:-0.2px;left:22.50px;">Case sensitivity</div>
<div class="r" style="left:200px;top:886.5px;width:176px;height:26px;background:#e1e1e1;border:1px solid #adadad;"></div>
<div class="t" style="top:892.75px;font-size:14px;line-height:14px;color:#222;letter-spacing:-0.2px;left:203.50px;">50% prefix</div>
<svg class="r" style="left:360px;top:896.5px;" width="11" height="7" viewBox="0 0 11 7"><path d="M1 1 L5.5 5.5 L10 1" fill="none" stroke="#555" stroke-width="1.2"/></svg>
<div class="r" style="left:200px;top:932.5px;width:176px;height:26px;background:#e1e1e1;border:1px solid #adadad;"></div>
<div class="t" style="top:939.05px;font-size:14px;line-height:14px;color:#222;letter-spacing:-0.2px;left:203.50px;">Permissive</div>
<svg class="r" style="left:360px;top:942.5px;" width="11" height="7" viewBox="0 0 11 7"><path d="M1 1 L5.5 5.5 L10 1" fill="none" stroke="#555" stroke-width="1.2"/></svg>
<div class="t" style="top:707.35px;font-size:14px;line-height:14px;color:#555;letter-spacing:-0.2px;left:406.80px;">Language</div>
<div class="t" style="top:705.73px;font-size:14.5px;line-height:14.5px;color:#444;font-weight:bold;left:530.50px;">French</div>
<div class="r" style="left:398px;top:736px;width:266px;height:26px;background:#ffffff;border:1px solid #7a7a7a;"></div>
<div class="t" style="top:741.85px;font-size:14px;line-height:14px;color:#111;letter-spacing:-0.2px;left:401.50px;">enjeux</div>
<div class="r" style="left:665px;top:737px;width:25px;height:27px;background:#e1e1e1;border:1px solid #cccccc;"></div>
<div class="r" style="left:692px;top:737px;width:25px;height:27px;background:#e1e1e1;border:1px solid #cccccc;"></div>
<div class="r" style="left:719px;top:737px;width:25px;height:27px;background:#e1e1e1;border:1px solid #cccccc;"></div>
<div class="r" style="left:746px;top:737px;width:25px;height:27px;background:#e1e1e1;border:1px solid #cccccc;"></div>
<svg class="r" style="left:669px;top:743px;" width="17" height="16" viewBox="0 0 17 16"><path d="M1.2 14.6 L7.8 1 H11 L12.6 14.6 H9.6 L9.3 11.3 H5.8 L4.3 14.6Z M7 8.8 H9.1 L8.8 4.6Z" fill="#222"/><path d="M9.8 4.5 C13 3.2 15.4 5.5 15.2 8.5 C15.2 11.5 13.5 14.5 10.5 14 C8.5 13.6 8.2 11 9 8.5Z" fill="#2fc47a"/><circle cx="11.5" cy="8.5" r="0.9" fill="#155a35"/><circle cx="11" cy="13.2" r="1" fill="#155a35"/></svg>
<svg class="r" style="left:696px;top:742px;" width="18" height="18" viewBox="0 0 18 18"><path d="M6.8 1.5 V13 M1.8 7.2 H12.8" stroke="#111" stroke-width="4.2"/><path d="M6.8 2.5 V12 M2.8 7.2 H11.8" stroke="#2a9ae8" stroke-width="2.2"/><path d="M3.5 14.8 H4.6 M6 14.8 H7.1" stroke="#111" stroke-width="1.4"/><path d="M8.5 14.8 H14.5" stroke="#111" stroke-width="1.6"/><path d="M12.3 12.3 L15.6 14.8 L12.3 17.3Z" fill="#111"/></svg>
<svg class="r" style="left:722px;top:742px;" width="18" height="18" viewBox="0 0 18 18"><path d="M0.8 3.4 L3.6 0.8 V6 Z" fill="#111"/><path d="M3 3.4 H5.5" stroke="#111" stroke-width="1.6"/><path d="M6.5 3.4 H7.6 M9 3.4 H10.1" stroke="#111" stroke-width="1.4"/><rect x="6" y="5.3" width="4.3" height="7.5" fill="#f4a418"/><path d="M10.3 5.2 V13 H5.8" stroke="#111" stroke-width="1.6" fill="none"/><path d="M8 14.3 H9.1 M10.5 14.3 H11.6" stroke="#111" stroke-width="1.4"/><path d="M12.5 14.3 H14.5" stroke="#111" stroke-width="1.6"/><path d="M14 11.8 L17 14.3 L14 16.8Z" fill="#111"/></svg>
<svg class="r" style="left:749px;top:742px;" width="18" height="14" viewBox="0 0 18 14"><path d="M0.8 3.4 L3.6 0.8 V6 Z" fill="#111"/><path d="M3 3.4 H5.5" stroke="#111" stroke-width="1.6"/><path d="M6.5 3.4 H7.6 M9 3.4 H10.1" stroke="#111" stroke-width="1.4"/><rect x="3" y="6.6" width="11" height="3.2" fill="#c82a18" stroke="#3a0a05" stroke-width="0.9"/></svg>
<div class="r" style="left:398px;top:770px;width:374px;height:80px;background:#ffffff;border:1px solid #828282;"></div>
<div class="r" style="left:400px;top:772px;width:349px;height:19px;background:#0078d7;"></div>
<div class="t" style="top:775.35px;font-size:14px;line-height:14px;color:#ffffff;letter-spacing:-0.2px;left:401.80px;">enjeux</div>
<div class="r" style="left:750px;top:771px;width:21px;height:78px;background:#ececec;"></div>
<svg class="r" style="left:755px;top:779px;" width="11" height="7" viewBox="0 0 11 7"><path d="M1 6 L5.5 1.5 L10 6" fill="none" stroke="#b5b5b5" stroke-width="1.3"/></svg>
<svg class="r" style="left:755px;top:833px;" width="11" height="7" viewBox="0 0 11 7"><path d="M1 1 L5.5 5.5 L10 1" fill="none" stroke="#b5b5b5" stroke-width="1.3"/></svg>
<div class="r" style="left:398px;top:878px;width:371px;height:111px;background:#ffffff;border:1px solid #d9d9d9;"></div>
<div class="r" style="left:471.5px;top:855px;width:58.80000000000001px;height:24px;background:#f0f0f0;border:1px solid #d9d9d9;"></div>
<div class="t" style="top:859.85px;font-size:14px;line-height:14px;color:#222;letter-spacing:-0.2px;left:475.70px;">Usage</div>
<div class="r" style="left:529.3px;top:855px;width:70.69999999999999px;height:24px;background:#f0f0f0;border:1px solid #d9d9d9;"></div>
<div class="t" style="top:859.85px;font-size:14px;line-height:14px;color:#222;letter-spacing:-0.2px;left:535.30px;">Grammar</div>
<div class="r" style="left:599px;top:855px;width:71px;height:24px;background:#f0f0f0;border:1px solid #d9d9d9;"></div>
<div class="t" style="top:859.85px;font-size:14px;line-height:14px;color:#222;letter-spacing:0.1px;left:605.50px;">Definition</div>
<div class="r" style="left:398.5px;top:852px;width:73.5px;height:27px;background:#ffffff;border:1px solid #d9d9d9;border-bottom:none;"></div>
<div class="t" style="top:857.95px;font-size:14px;line-height:14px;color:#222;letter-spacing:-0.2px;left:405.50px;">Matching</div>
<div class="t" style="top:889.25px;font-size:14px;line-height:14px;color:#555;letter-spacing:-0.2px;left:410.50px;">Matching</div>
<div class="t" style="top:934.85px;font-size:14px;line-height:14px;color:#555;letter-spacing:-0.2px;left:410.50px;">Case sensitivity</div>
<div class="r" style="left:588px;top:886.5px;width:176px;height:26px;background:#e1e1e1;border:1px solid #adadad;"></div>
<div class="t" style="top:892.75px;font-size:14px;line-height:14px;color:#222;letter-spacing:-0.2px;left:591.50px;">50% prefix</div>
<svg class="r" style="left:748px;top:896.5px;" width="11" height="7" viewBox="0 0 11 7"><path d="M1 1 L5.5 5.5 L10 1" fill="none" stroke="#555" stroke-width="1.2"/></svg>
<div class="r" style="left:588px;top:932.5px;width:176px;height:26px;background:#e1e1e1;border:1px solid #adadad;"></div>
<div class="t" style="top:939.05px;font-size:14px;line-height:14px;color:#222;letter-spacing:-0.2px;left:591.50px;">Permissive</div>
<svg class="r" style="left:748px;top:942.5px;" width="11" height="7" viewBox="0 0 11 7"><path d="M1 1 L5.5 5.5 L10 1" fill="none" stroke="#555" stroke-width="1.2"/></svg>
<div class="r" style="left:783px;top:730px;width:510px;height:259px;background:#ffffff;border:1px solid #d9d9d9;"></div>
<div class="r" style="left:894px;top:707px;width:57px;height:24px;background:#f0f0f0;border:1px solid #d9d9d9;"></div>
<div class="t" style="top:712.75px;font-size:14px;line-height:14px;color:#222;letter-spacing:-0.2px;left:898.20px;">Image</div>
<div class="r" style="left:783px;top:704px;width:112px;height:27px;background:#ffffff;border:1px solid #d9d9d9;border-bottom:none;"></div>
<div class="t" style="top:709.95px;font-size:14px;line-height:14px;color:#222;letter-spacing:-0.2px;left:790.20px;">Entry-level data</div>
<div class="t" style="top:747.25px;font-size:14px;line-height:14px;color:#555;letter-spacing:-0.2px;left:748.30px;width:150px;text-align:right;">ID</div>
<div class="t" style="top:780.95px;font-size:14px;line-height:14px;color:#555;letter-spacing:-0.2px;left:748.30px;width:150px;text-align:right;">Note</div>
<div class="t" style="top:848.85px;font-size:14px;line-height:14px;color:#555;letter-spacing:-0.2px;left:748.30px;width:150px;text-align:right;">Project</div>
<div class="t" style="top:885.15px;font-size:14px;line-height:14px;color:#555;letter-spacing:-0.2px;left:748.30px;width:150px;text-align:right;">Domain</div>
<div class="t" style="top:919.05px;font-size:14px;line-height:14px;color:#555;letter-spacing:-0.2px;left:748.30px;width:150px;text-align:right;">Created by</div>
<div class="t" style="top:955.35px;font-size:14px;line-height:14px;color:#555;letter-spacing:-0.2px;left:748.30px;width:150px;text-align:right;">Modified by</div>
<div class="t" style="top:848.85px;font-size:14px;line-height:14px;color:#555;letter-spacing:-0.2px;left:1138.50px;width:150px;text-align:right;">Client</div>
<div class="t" style="top:885.15px;font-size:14px;line-height:14px;color:#555;letter-spacing:-0.2px;left:1138.50px;width:150px;text-align:right;">Subject</div>
<div class="t" style="top:919.05px;font-size:14px;line-height:14px;color:#555;letter-spacing:-0.2px;left:1138.50px;width:150px;text-align:right;">Created at</div>
<div class="t" style="top:955.35px;font-size:14px;line-height:14px;color:#555;letter-spacing:-0.2px;left:1138.50px;width:150px;text-align:right;">Modified at</div>
<div class="r" style="left:910px;top:738px;width:122px;height:26px;background:#f0f0f0;border:1px solid #7a7a7a;"></div>
<div class="t" style="top:744.15px;font-size:14px;line-height:14px;color:#111;letter-spacing:-0.2px;left:912.50px;">656</div>
<div class="r" style="left:910px;top:772px;width:400px;height:60px;background:#ffffff;border:1px solid #7a7a7a;"></div>
<div class="r" style="left:910px;top:840px;width:257px;height:26px;background:#ffffff;border:1px solid #7a7a7a;"></div>
<div class="r" style="left:910px;top:876px;width:257px;height:26px;background:#ffffff;border:1px solid #7a7a7a;"></div>
<div class="r" style="left:910px;top:910px;width:257px;height:26px;background:#f0f0f0;border:1px solid #7a7a7a;"></div>
<div class="r" style="left:910px;top:946px;width:257px;height:26px;background:#f0f0f0;border:1px solid #3d80b5;"></div>
<div class="r" style="left:915px;top:916px;width:42px;height:15px;background:#cfcfcf;filter:blur(2.5px);border-radius:3px;"></div>
<div class="r" style="left:915px;top:952px;width:42px;height:15px;background:#c8c8c8;filter:blur(2.5px);border-radius:3px;"></div>
<div class="r" style="left:0px;top:993px;width:1288px;height:36px;background:#f1f1f1;"></div>
<div class="t" style="top:1006.43px;font-size:14.85px;line-height:14.85px;color:#505050;left:6.20px;">The selected entry is marked as the master; other entries will be merged into it.</div>
<div class="r" style="left:0px;top:1030px;width:1288px;height:4px;background:#1c2226;"></div>
<div class="r" style="left:556px;top:1030px;width:61px;height:4px;background:#b5652c;"></div>
<div class="r" style="left:1052px;top:1030px;width:60px;height:4px;background:#b5652c;"></div>
<div class="r" style="left:1112px;top:1030px;width:61px;height:4px;background:#4a4f53;"></div>
</body></html>
